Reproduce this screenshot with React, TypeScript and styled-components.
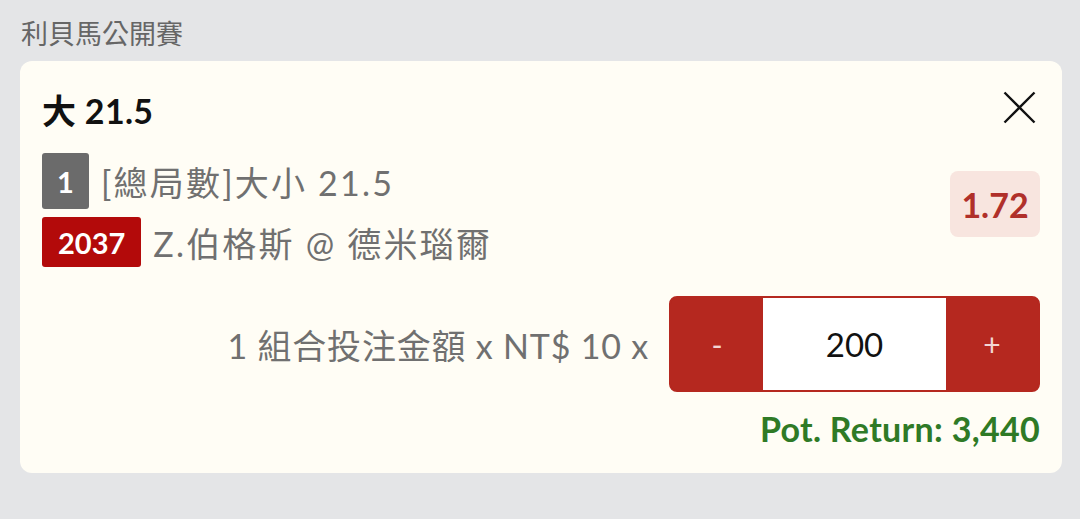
import React from "react";
import styled, { createGlobalStyle } from "styled-components";

const GlobalStyle = createGlobalStyle`
  html, body {
    margin: 0;
    padding: 0;
    background: #e4e5e7;
  }
  body {
    font-family: Lato, "Noto Sans CJK TC", sans-serif;
  }
`;

const Page = styled.div`
  padding: 16px 18px 0 20px;
  width: 1080px;
  height: 519px;
  box-sizing: border-box;
`;

const League = styled.div`
  font-size: 27px;
  line-height: 36px;
  color: #666;
  padding-left: 1px;
  margin-bottom: 9px;
`;

const Card = styled.div`
  background: #fffdf5;
  border-radius: 12px;
  padding: 24px 22px 24px 22px;
  display: flex;
  flex-direction: column;
`;

const TitleRow = styled.div`
  display: flex;
  justify-content: space-between;
  align-items: center;
  height: 48px;
`;

const Title = styled.div`
  font-size: 34px;
  letter-spacing: 0.3px;
  font-weight: 700;
  color: #111;
`;

const CloseButton = styled.button`
  border: 0;
  background: none;
  padding: 0;
  margin: 0 4px 4px 0;
  width: 34px;
  height: 34px;
  display: flex;
  align-items: center;
  justify-content: center;
`;

const BetInfo = styled.div`
  display: flex;
  justify-content: space-between;
  align-items: flex-start;
  margin-top: 20px;
`;

const Selections = styled.div`
  display: flex;
  flex-direction: column;
  gap: 8px;
`;

const SelRow = styled.div`
  display: flex;
  align-items: center;
  gap: 12px;
`;

const Badge = styled.span<{ $tone: "gray" | "red" }>`
  display: inline-flex;
  align-items: center;
  justify-content: center;
  box-sizing: border-box;
  height: ${(p) => (p.$tone === "gray" ? "56px" : "50px")};
  min-width: 47px;
  padding: ${(p) => (p.$tone === "gray" ? "0" : "0 16px")};
  border-radius: 3px;
  background: ${(p) => (p.$tone === "gray" ? "#6b6b6b" : "#b30a0a")};
  color: #fff;
  font-size: 29px;
  font-weight: 700;
`;

const SelText = styled.span`
  font-size: 34px;
  letter-spacing: 2.2px;
  color: #707070;
`;

const Odds = styled.div`
  margin-top: 18px;
  background: #f8e5df;
  color: #b0302a;
  border-radius: 8px;
  width: 90px;
  height: 66px;
  display: flex;
  align-items: center;
  justify-content: center;
  font-size: 34px;
  font-weight: 700;
`;

const StakeRow = styled.div`
  display: flex;
  justify-content: flex-end;
  align-items: center;
  gap: 20px;
  margin-top: 29px;
`;

const StakeLabel = styled.span`
  font-size: 34px;
  letter-spacing: 0.8px;
  color: #707070;
`;

const Stepper = styled.div`
  display: flex;
  width: 371px;
  height: 96px;
  box-sizing: border-box;
  border: 2px solid #b5281f;
  border-radius: 8px;
  overflow: hidden;
  background: #b5281f;
`;

const StepButton = styled.button`
  width: 92px;
  border: 0;
  background: #b5281f;
  color: #f3d6d3;
  font-family: Lato, sans-serif;
  font-size: 30px;
  padding: 0;
`;

const StakeValue = styled.div`
  flex: 1;
  background: #fff;
  display: flex;
  align-items: center;
  justify-content: center;
  font-size: 33px;
  color: #111;
`;

const PotReturn = styled.div`
  text-align: right;
  margin-top: 16px;
  font-size: 34px;
  letter-spacing: 0.3px;
  font-weight: 700;
  color: #2f7a26;
`;

export default function App() {
  return (
    <>
      <GlobalStyle />
      <Page>
        <League>利貝馬公開賽</League>
        <Card>
          <TitleRow>
            <Title>大 21.5</Title>
            <CloseButton aria-label="close">
              <svg width="33" height="33" viewBox="0 0 33 33">
                <path d="M1.5 1.5 L31.5 31.5 M31.5 1.5 L1.5 31.5" stroke="#111" strokeWidth="2.4" />
              </svg>
            </CloseButton>
          </TitleRow>
          <BetInfo>
            <Selections>
              <SelRow>
                <Badge $tone="gray">1</Badge>
                <SelText>[總局數]大小 21.5</SelText>
              </SelRow>
              <SelRow>
                <Badge $tone="red">2037</Badge>
                <SelText>Z.伯格斯 @ 德米瑙爾</SelText>
              </SelRow>
            </Selections>
            <Odds>1.72</Odds>
          </BetInfo>
          <StakeRow>
            <StakeLabel>1 組合投注金額 x NT$ 10 x</StakeLabel>
            <Stepper>
              <StepButton>-</StepButton>
              <StakeValue>200</StakeValue>
              <StepButton>+</StepButton>
            </Stepper>
          </StakeRow>
          <PotReturn>Pot. Return: 3,440</PotReturn>
        </Card>
      </Page>
    </>
  );
}
